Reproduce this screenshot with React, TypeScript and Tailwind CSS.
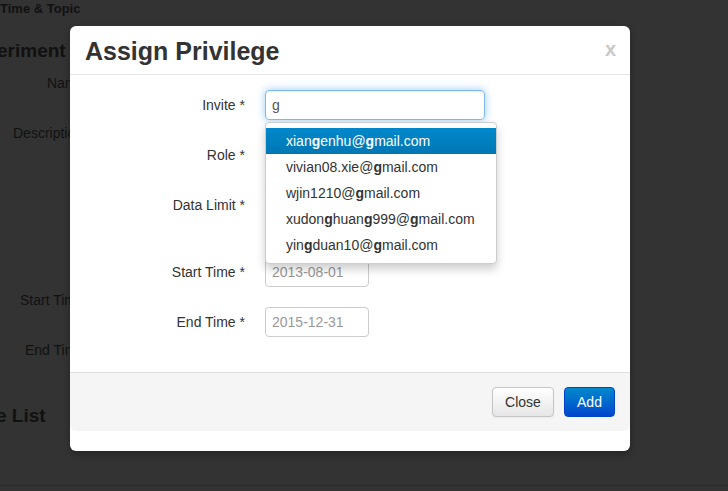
const emails = [
  ["xian", "g", "enhu@", "g", "mail.com"],
  ["vivian08.xie@", "g", "mail.com"],
  ["wjin1210@", "g", "mail.com"],
  ["xudon", "g", "huan", "g", "999@", "g", "mail.com"],
  ["yin", "g", "duan10@", "g", "mail.com"],
]

function Row({ label, children, className }: { label: string; children?: React.ReactNode; className?: string }) {
  return (
    <div className={`flex items-center ${className ?? ""}`}>
      <label className="w-[195px] text-right pr-[20px] text-[14px] text-[#333]">{label}</label>
      {children}
    </div>
  )
}

export default function App() {
  return (
    <div className="relative w-[728px] h-[491px] overflow-hidden bg-[#333] font-['Liberation_Sans',Arial,sans-serif]">
      {/* page behind the backdrop */}
      <div className="text-[#111]">
        <div className="absolute left-0 top-0 text-[13px] font-bold leading-[17px]">Time &amp; Topic</div>
        <div className="absolute left-[-3px] top-[37px] text-[19px] font-bold">eriment</div>
        <div className="absolute left-[47px] top-[73px] text-[14px]">Name</div>
        <div className="absolute left-[13px] top-[123px] text-[14px]">Description</div>
        <div className="absolute left-[20px] top-[290px] text-[14px]">Start Time</div>
        <div className="absolute left-[25px] top-[340px] text-[14px]">End Time</div>
        <div className="absolute left-[-4px] top-[402px] text-[19px] font-bold">e List</div>
        <div className="absolute left-0 right-0 top-[485px] border-t border-[#2a2a2a]" />
      </div>

      {/* modal */}
      <div className="absolute left-[70px] top-[26px] w-[560px] h-[425px] bg-white rounded-[6px] shadow-[0_3px_7px_rgba(0,0,0,0.3)]">
        <div className="flex items-center justify-between h-[49px] px-[15px] border-b border-[#e5e5e5]">
          <h3 className="text-[25px] font-bold text-[#333] leading-[30px] pt-[1px]">Assign Privilege</h3>
          <span className="text-[20px] font-bold text-[#c8c8c8] leading-none mr-[-1px] mt-[-2px]">x</span>
        </div>

        <div className="relative pt-[15px] h-[297px]">
          <Row label="Invite *">
            <input
              readOnly
              value="g"
              className="w-[220px] h-[30px] px-[6px] rounded-[4px] border border-[#7fb9ef] text-[14px] text-[#555] outline-none shadow-[inset_0_1px_1px_rgba(0,0,0,0.075),0_0_8px_rgba(82,168,236,0.6)]"
            />
          </Row>
          <Row label="Role *" className="mt-[20px]">
            <div className="w-[220px] h-[30px] rounded-[4px] border border-[#ccc]" />
          </Row>
          <Row label="Data Limit *" className="mt-[20px]">
            <div className="w-[220px] h-[30px] rounded-[4px] border border-[#ccc]" />
          </Row>
          <Row label="Start Time *" className="mt-[37px]">
            <div className="w-[104px] h-[30px] px-[6px] rounded-[4px] border border-[#ccc] text-[14px] text-[#999] leading-[28px]">2013-08-01</div>
          </Row>
          <Row label="End Time *" className="mt-[20px]">
            <div className="w-[104px] h-[30px] px-[6px] rounded-[4px] border border-[#ccc] text-[14px] text-[#999] leading-[28px]">2015-12-31</div>
          </Row>

          {/* typeahead */}
          <ul className="absolute left-[195px] top-[47px] w-[232px] py-[5px] bg-white border border-[#ccc] rounded-[4px] shadow-[0_5px_10px_rgba(0,0,0,0.2)]">
            {emails.map((parts, i) => (
              <li
                key={i}
                className={`h-[26px] pl-[20px] text-[14px] leading-[26px] ${
                  i === 0 ? "bg-gradient-to-b from-[#0088cc] to-[#0077b3] text-white" : "text-[#333]"
                }`}
              >
                {parts.map((p, j) => (p === "g" ? <strong key={j}>g</strong> : <span key={j}>{p}</span>))}
              </li>
            ))}
          </ul>
        </div>

        <div className="flex justify-end gap-[10px] h-[59px] pl-[15px] pr-[15px] pt-[14px] bg-[#f5f5f5] border-t border-[#ddd] rounded-b-[6px]">
          <button className="h-[30px] w-[62px] rounded-[4px] border border-[#c5c5c5] bg-gradient-to-b from-white to-[#e6e6e6] text-[14px] text-[#333] shadow-[inset_0_1px_0_rgba(255,255,255,0.2),0_1px_2px_rgba(0,0,0,0.05)]">
            Close
          </button>
          <button className="h-[30px] w-[51px] rounded-[4px] border border-[#04c] bg-gradient-to-b from-[#0088cc] to-[#0044cc] text-[14px] text-white">
            Add
          </button>
        </div>
      </div>
    </div>
  )
}
